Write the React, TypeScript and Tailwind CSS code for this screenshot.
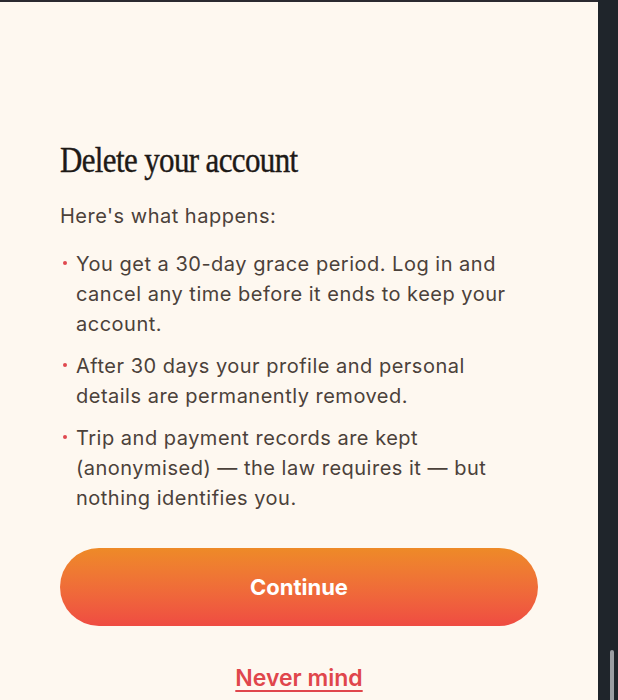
import React from "react";

export default function App() {
  const items = [
    "You get a 30-day grace period. Log in and cancel any time before it ends to keep your account.",
    "After 30 days your profile and personal details are permanently removed.",
    "Trip and payment records are kept (anonymised) — the law requires it — but nothing identifies you.",
  ];
  return (
    <div className="flex h-[700px] w-[618px] overflow-hidden bg-[#1f252b]">
      <div className="flex w-[598px] flex-col bg-[#fef8f0]">
        <div className="h-[2px] bg-[#2b2a30]" />
        <div className="flex flex-col px-[60px] pt-[138px] font-['Inter',sans-serif]">
          <h1 className="origin-left scale-x-[0.86] whitespace-nowrap font-['Liberation_Serif',serif] text-[36px] leading-[40px] tracking-[-0.02em] text-[#1e1a17] [-webkit-text-stroke:0.4px_#1e1a17]">
            Delete your account
          </h1>
          <p className="mt-[21px] text-[20px] leading-[30px] tracking-[0.5px] text-[#4b413a]">Here's what happens:</p>
          <ul className="mt-[18px] flex flex-col gap-[12px]">
            {items.map((t) => (
              <li key={t} className="flex text-[20px] leading-[30px] tracking-[0.5px] text-[#4b413a]">
                <span className="ml-[3px] mr-[9px] mt-[12px] h-[4px] w-[4px] shrink-0 rounded-full bg-[#e0484f]" />
                <span className="pr-[16px]">{t}</span>
              </li>
            ))}
          </ul>
          <button className="mt-[35px] h-[78px] w-full rounded-full bg-gradient-to-b from-[#ee8a27] to-[#ef4b42] text-[22px] font-bold text-white">
            Continue
          </button>
          <div className="mt-[38px] text-center leading-[28px]">
            <span className="text-[23px] font-semibold text-[#e0464c] underline underline-offset-[4px] decoration-[2px]">
              Never mind
            </span>
          </div>
        </div>
      </div>
      <div className="relative w-[20px]">
        <div className="absolute left-[12px] top-[650px] h-[60px] w-[4px] rounded-full bg-[#9b9ea3]" />
      </div>
    </div>
  );
}
